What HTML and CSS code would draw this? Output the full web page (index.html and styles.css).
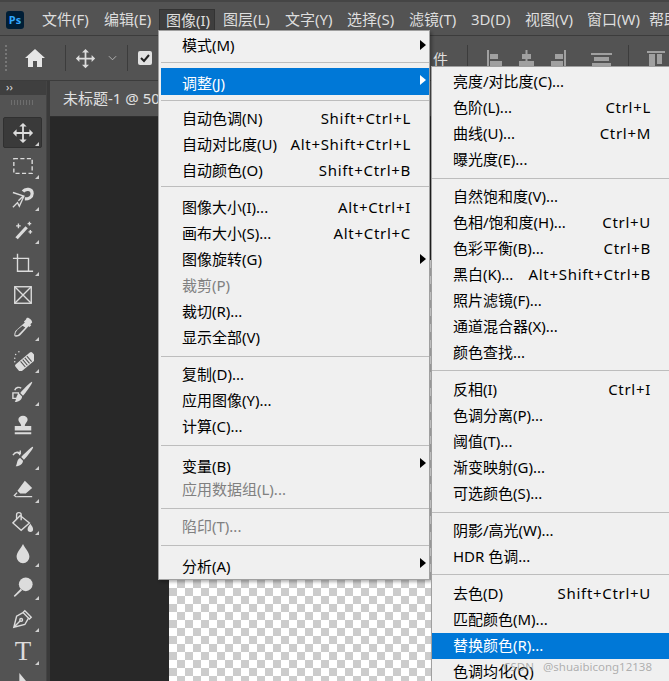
FILE: index.html
```html
<!DOCTYPE html>
<html lang="zh-CN">
<head>
    <meta charset="UTF-8">
    <title>图像 调整 菜单</title>
    <link rel="stylesheet" href="styles.css">
</head>
<body>
    <div class="app">
        <div class="menubar">
            <div class="ps-logo">Ps</div>
            <div class="menu-title">文件(F)</div>
            <div class="menu-title">编辑(E)</div>
            <div class="menu-title active">图像(I)</div>
            <div class="menu-title">图层(L)</div>
            <div class="menu-title">文字(Y)</div>
            <div class="menu-title">选择(S)</div>
            <div class="menu-title">滤镜(T)</div>
            <div class="menu-title">3D(D)</div>
            <div class="menu-title">视图(V)</div>
            <div class="menu-title">窗口(W)</div>
            <div class="menu-title">帮助(H)</div>
        </div>

        <div class="optionsbar">
            <div class="grip"></div>
            <svg class="home" viewBox="0 0 22 20"><path d="M11 1 1 10h3v9h5v-6h4v6h5v-9h3z"/></svg>
            <div class="vline"></div>
            <svg class="opt-move" viewBox="0 0 24 24"><use href="#i-move"/></svg>
            <svg class="chevron" viewBox="0 0 10 6"><path d="M1 1l4 4 4-4"/></svg>
            <div class="vline"></div>
            <div class="checkbox"><svg viewBox="0 0 14 14"><path d="M3 7l3 3 5-6"/></svg></div>
            <div class="opt-spacer"></div>
            <span class="opt-label">件</span>
            <div class="vline"></div>
            <svg class="align first" viewBox="0 0 15 24"><path d="M0 0h2v24H0zM3 4h8v5H3zM3 11h12v7H3z"/></svg>
            <svg class="align" viewBox="0 0 15 24"><path d="M6.500 0h2v24h-2zM3 4h9v5H3zM0 11h15v7H0z"/></svg>
            <svg class="align" viewBox="0 0 15 24"><path d="M13 0h2v24h-2zM4 4h8v5H4zM0 11h12v7H0z"/></svg>
            <svg class="align wide" viewBox="0 0 21 24"><path d="M0 3h21v2H0zM3 7h15v4H3zM1 13h19v5H1z"/></svg>
            <div class="vline"></div>
            <svg class="align last" viewBox="0 0 18 24"><path d="M0 1h18v2H0zM2 4h6v20H2zM10 4h5v10h-5z"/></svg>
        </div>

        <div class="workspace">
            <div class="tools">
                <div class="tools-head">››</div>
                <div class="tools-grip"></div>
                <div class="tool selected"><svg viewBox="0 0 24 24"><use href="#i-move"/></svg></div>
                <div class="tool corner"><svg class="line" viewBox="0 0 24 24"><rect x="2" y="4" width="20" height="16" stroke-dasharray="4.500 2.600"/></svg></div>
                <div class="tool corner"><svg class="line" viewBox="0 0 24 24"><path d="M1 6l12 4-5 11-2-4-5 5M7 15l5-5"/><path class="thick" d="M12 5c3-4 10-3 10 2 0 4-4 6-8 6"/></svg></div>
                <div class="tool corner"><svg class="line" viewBox="0 0 24 24"><path class="thick" d="M5 21 16 9"/><path d="M7 5v5M4.500 7.500h5M19 3v4M17 5h4M20 12v4M18 14h4"/></svg></div>
                <div class="tool corner"><svg class="line" viewBox="0 0 24 24"><path d="M1 5h17v14M6 0v19h17" transform="translate(0 2)"/></svg></div>
                <div class="tool"><svg class="line" viewBox="0 0 24 24"><rect x="3" y="3" width="18" height="18"/><path d="M3 3l18 18M21 3 3 21"/></svg></div>
                <div class="tool corner"><svg viewBox="0 0 24 24"><path d="M16 1c2-1 6 2 6 5l-2 2 1 1-2 2-1-1-9 10c-1 1-5 2-6 1s0-5 1-6l10-9-1-1 2-2zM6 14l-2 3-.500 3 3-.500 3-3 5-5-3-2z" fill-rule="evenodd"/></svg></div>
                <div class="tool corner"><svg viewBox="0 0 24 24"><g transform="rotate(-40 15 14)"><rect x="3" y="9" width="24" height="10" rx="2"/><path class="cut" d="M11 10v8M14 10v8M17 10v8M20 10v8"/></g><circle cx="3" cy="10" r=".8"/><circle cx="4" cy="6" r=".8"/><circle cx="7.500" cy="3" r=".8"/><circle cx="3" cy="14" r=".8"/></svg></div>
                <div class="tool corner"><svg viewBox="0 0 24 24"><path d="M22 1c1 1-8 13-10 15l-3-3C11 11 21 0 22 1zM8 14l3 3c0 3-3 6-8 6 2-2 1-8 5-9z"/><path class="line" d="M1 13h6v6H1z"/><path class="line" d="M3 10c1-3 5-4 7-2"/></svg></div>
                <div class="tool"><svg viewBox="0 0 24 24"><path d="M12 2c3 0 5 2 5 4 0 3-3 4-3 7h7v5H3v-5h7c0-3-3-4-3-7 0-2 2-4 5-4zM3 20h18v2H3z"/></svg></div>
                <div class="tool corner"><svg viewBox="0 0 24 24"><path d="M23 1c1 1-8 12-10 14l-3-3C12 10 22 0 23 1zM9 13l3 3c0 3-3 6-8 6 2-2 1-8 5-9z"/><path class="line" d="M1 10c2-3 5-4 8-2l-1 2M9 5l0 3-3 0"/></svg></div>
                <div class="tool corner"><svg viewBox="0 0 24 24"><path d="M14 3l8 8-7 6H9l-3-3zM5 15.500 1.500 19 4 21h18v-1.400H9l-4.500.4-1-1 2.600-2.600z"/></svg></div>
                <div class="tool corner"><svg class="line" viewBox="0 0 24 24"><path d="M9 5 1 13l9 8 9-8z"/><path d="M5 9V4c0-3 5-3 5 0v6"/><path class="solid" d="M20 14c2 3 3 4 3 6a3 3 0 0 1-6 0c0-2 1-3 3-6z"/></svg></div>
                <div class="tool corner"><svg viewBox="0 0 24 24"><path d="M12 1c3 6 7 9 7 14a7 7 0 0 1-14 0c0-5 4-8 7-14z"/></svg></div>
                <div class="tool corner"><svg viewBox="0 0 24 24"><circle cx="15" cy="9" r="7.500"/><path d="M9.500 14 2 21.500 3 23l8-7.500z"/></svg></div>
                <div class="tool corner"><svg class="line" viewBox="0 0 24 24"><path d="M14 3l7 7-2 2-7-7zM12 5l-7 4-3 12 12-3 4-7M2 21l7-7"/><circle cx="10" cy="13" r="1.500"/></svg></div>
                <div class="tool corner"><span class="tool-t">T</span></div>
                <div class="tool"><svg viewBox="0 0 24 24"><path d="M8 0v16l4-4h6z"/></svg></div>
            </div>
            <div class="gutter"></div>
            <div class="documents">
                <div class="doc-tabs"><div class="doc-tab">未标题-1 @ 50%</div></div>
                <div class="doc-area"><div class="canvas"></div></div>
            </div>
        </div>
    </div>

    <div class="menu main-menu">
        <div class="row submenu">模式(M)</div>
        <div class="sep first"></div>
        <div class="row hot submenu tall">调整(J)</div>
        <div class="sep"></div>
        <div class="row">自动色调(N)<span>Shift+Ctrl+L</span></div>
        <div class="row">自动对比度(U)<span>Alt+Shift+Ctrl+L</span></div>
        <div class="row">自动颜色(O)<span>Shift+Ctrl+B</span></div>
        <div class="sep high"></div>
        <div class="row">图像大小(I)...<span>Alt+Ctrl+I</span></div>
        <div class="row">画布大小(S)...<span>Alt+Ctrl+C</span></div>
        <div class="row submenu">图像旋转(G)</div>
        <div class="row off">裁剪(P)</div>
        <div class="row">裁切(R)...</div>
        <div class="row">显示全部(V)</div>
        <div class="sep"></div>
        <div class="row">复制(D)...</div>
        <div class="row">应用图像(Y)...</div>
        <div class="row">计算(C)...</div>
        <div class="sep"></div>
        <div class="row submenu low">变量(B)</div>
        <div class="row off">应用数据组(L)...</div>
        <div class="sep"></div>
        <div class="row off">陷印(T)...</div>
        <div class="sep"></div>
        <div class="row submenu low">分析(A)</div>
    </div>

    <div class="menu sub-menu">
        <div class="row">亮度/对比度(C)...</div>
        <div class="row">色阶(L)...<span>Ctrl+L</span></div>
        <div class="row">曲线(U)...<span>Ctrl+M</span></div>
        <div class="row">曝光度(E)...</div>
        <div class="sep"></div>
        <div class="row">自然饱和度(V)...</div>
        <div class="row">色相/饱和度(H)...<span>Ctrl+U</span></div>
        <div class="row">色彩平衡(B)...<span>Ctrl+B</span></div>
        <div class="row">黑白(K)...<span>Alt+Shift+Ctrl+B</span></div>
        <div class="row">照片滤镜(F)...</div>
        <div class="row">通道混合器(X)...</div>
        <div class="row">颜色查找...</div>
        <div class="sep mid"></div>
        <div class="row">反相(I)<span>Ctrl+I</span></div>
        <div class="row">色调分离(P)...</div>
        <div class="row">阈值(T)...</div>
        <div class="row">渐变映射(G)...</div>
        <div class="row">可选颜色(S)...</div>
        <div class="sep"></div>
        <div class="row">阴影/高光(W)...</div>
        <div class="row">HDR 色调...</div>
        <div class="sep mid"></div>
        <div class="row">去色(D)<span>Shift+Ctrl+U</span></div>
        <div class="row">匹配颜色(M)...</div>
        <div class="row hot">替换颜色(R)...</div>
        <div class="row">色调均化(Q)</div>
    </div>

    <div class="watermark">CSDN @shuaibicong12138</div>

    <svg class="defs" width="0" height="0">
        <symbol id="i-move" viewBox="0 0 24 24">
            <path d="M12 1l4 4h-3v6h6V8l4 4-4 4v-3h-6v6h3l-4 4-4-4h3v-6H5v3l-4-4 4-4v3h6V5H8z"/>
        </symbol>
    </svg>
</body>
</html>
```

FILE: styles.css
```css
* {
    box-sizing: border-box;
}

html, body {
    margin: 0;
    height: 681px;
    overflow: hidden;
}

body {
    position: relative;
    font-family: "Noto Sans", "Noto Sans CJK SC", sans-serif;
    font-size: 15px;
    background-color: #282828;
}

.app {
    display: flex;
    flex-direction: column;
    height: 681px;
    overflow: hidden;
}

/* menu bar */
.menubar {
    display: flex;
    align-items: center;
    height: 36px;
    padding: 2px 0 0 6px;
    background-color: #535353;
    border-top: 2px solid #454545;
    border-bottom: 1px solid #3c3c3c;
    color: #dedede;
    white-space: nowrap;
    overflow: hidden;
}

.ps-logo {
    flex-shrink: 0;
    width: 18px;
    height: 18px;
    margin-right: 11px;
    border-radius: 3px;
    background-color: #001e36;
    color: #31a8ff;
    font-size: 11px;
    font-weight: bold;
    line-height: 18px;
    text-align: center;
}

.menu-title {
    flex-shrink: 0;
    width: 62px;
    height: 22px;
    padding-left: 7px;
    line-height: 21px;
}

.menu-title.active {
    width: 56px;
    margin-right: 1px;
    padding-left: 6px;
    background-color: #3e3e3e;
    border: 1px solid #333;
    border-bottom: 0;
    line-height: 20px;
}

.menu-title:nth-child(9) {
    width: 54px;
}

/* options bar */
.optionsbar {
    display: flex;
    align-items: center;
    height: 45px;
    padding: 0 4px 0 5px;
    background-color: #535353;
    border-bottom: 1px solid #3c3c3c;
    color: #dedede;
}

.grip {
    width: 2px;
    height: 26px;
    border-left: 2px dotted #777;
}

.home {
    width: 22px;
    height: 20px;
    margin: 0 19px 0 17px;
    fill: #e6e6e6;
}

.vline {
    width: 1px;
    height: 26px;
    background-color: #3c3c3c;
}

.opt-move {
    width: 21px;
    height: 21px;
    margin-left: 9px;
    fill: #dcdcdc;
}

.chevron {
    width: 9px;
    height: 6px;
    margin: 0 10px 0 12px;
    fill: none;
    stroke: #bbb;
}

.checkbox {
    width: 14px;
    height: 14px;
    margin-left: 10px;
    border-radius: 2px;
    background-color: #e2e2e2;
}

.checkbox svg {
    display: block;
    fill: none;
    stroke: #222;
    stroke-width: 2;
}

.opt-spacer {
    flex: 1;
}

.opt-label {
    margin-right: 19px;
}

.align {
    width: 15px;
    height: 24px;
    margin: 8px 0 0 17px;
    fill: #a0a0a0;
}

.align.first {
    margin-left: 19px;
}

.align.wide {
    width: 21px;
    margin-left: 25px;
    margin-right: 16px;
}

.align.last {
    width: 18px;
    margin-left: 18px;
}

/* tools column */
.workspace {
    display: flex;
    flex: 1;
    min-height: 0;
}

.tools {
    width: 47px;
    flex-shrink: 0;
    background-color: #535353;
    border-right: 1px solid #444;
    overflow: hidden;
}

.tools-head {
    height: 14px;
    padding-left: 6px;
    background-color: #3f3f3f;
    color: #ddd;
    font-size: 11px;
    line-height: 12px;
}

.tools-grip {
    height: 22px;
    margin: 0 11px;
    background: repeating-linear-gradient(90deg, #6e6e6e 0 1px, transparent 1px 3px) 0 5px / 100% 5px no-repeat;
}

.tool {
    position: relative;
    display: flex;
    align-items: center;
    justify-content: center;
    width: 46px;
    height: 32.400px;
}

.tool svg {
    width: 22px;
    height: 22px;
    fill: #dcdcdc;
}

.tool .line,
.tool svg .line {
    fill: none;
    stroke: #dcdcdc;
    stroke-width: 1.500;
}

.tool .thick {
    stroke-width: 3.500;
}

.tool .solid {
    fill: #dcdcdc;
    stroke: none;
}

.tool .cut {
    fill: none;
    stroke: #535353;
    stroke-width: 1.200;
}

.tool.selected::before {
    content: "";
    position: absolute;
    left: 3px;
    right: 4px;
    top: 0;
    bottom: 1px;
    background-color: #3a3a3a;
    border: 1px solid #303030;
    border-radius: 2px;
}

.tool.selected svg {
    position: relative;
}

.tool.selected::after,
.tool.corner::after {
    content: "";
    position: absolute;
    right: 7px;
    bottom: 3px;
    border-style: solid;
    border-width: 0 0 4px 4px;
    border-color: transparent transparent #cfcfcf transparent;
}

.tool-t {
    color: #dcdcdc;
    font-family: "Liberation Serif", serif;
    font-size: 27px;
    line-height: 27px;
}

.gutter {
    width: 3px;
    flex-shrink: 0;
    background-color: #3a3a3a;
}

/* document */
.documents {
    display: flex;
    flex-direction: column;
    flex: 1;
    min-width: 0;
}

.doc-tabs {
    height: 36px;
    background-color: #424242;
    border-bottom: 1px solid #2f2f2f;
}

.doc-tab {
    height: 35px;
    padding-left: 13px;
    background-color: #535353;
    color: #e0e0e0;
    line-height: 34px;
    white-space: nowrap;
}

.doc-area {
    flex: 1;
    min-height: 0;
    padding: 143px 0 0 119px;
    background-color: #282828;
}

.canvas {
    height: 421px;
    background-color: #fff;
    background-image: conic-gradient(#ccc 25%, #fff 25% 50%, #ccc 50% 75%, #fff 75%);
    background-size: 16px 16px;
}

/* menus */
.menu {
    position: absolute;
    background-color: #f0f0f0;
    border: 1px solid #a0a0a0;
    color: #000;
    box-shadow: 2px 2px 3px rgba(0, 0, 0, .3);
    overflow: hidden;
}

.main-menu {
    left: 158px;
    top: 30px;
    width: 272px;
    height: 550px;
    padding: 2px 0 0 2px;
}

.sub-menu {
    left: 431px;
    top: 66px;
    width: 238px;
    height: 615px;
    padding-top: 2px;
    border-right: 0;
    border-bottom: 0;
}

.row {
    position: relative;
    display: flex;
    justify-content: space-between;
    height: 26px;
    padding: 0 18px 0 21px;
    line-height: 25px;
    white-space: nowrap;
}

.row span {
    letter-spacing: .7px;
}

.row.tall {
    height: 27px;
    line-height: 30px;
}

.row.low {
    line-height: 31px;
}

.row.hot {
    background-color: #0078d7;
    color: #fff;
}

.row.off {
    color: #808080;
}

.row.submenu::after {
    content: "";
    position: absolute;
    right: 3px;
    top: 7px;
    border-style: solid;
    border-width: 5px 0 5px 6px;
    border-color: transparent transparent transparent currentColor;
}

.sep {
    height: 11px;
    background: linear-gradient(#bdbdbd, #bdbdbd) 0 5px / 100% 1px no-repeat;
}

.sep.first {
    height: 9px;
    background-position: 0 3px;
}

.sep.high {
    background-position: 0 2px;
}

.sep.mid {
    background-position: 0 4px;
}

.watermark {
    position: absolute;
    right: 17px;
    top: 660px;
    color: rgba(130, 130, 130, .6);
    font-size: 11.500px;
    line-height: 14px;
    word-spacing: 6px;
    white-space: nowrap;
}

.defs {
    position: absolute;
}
```
